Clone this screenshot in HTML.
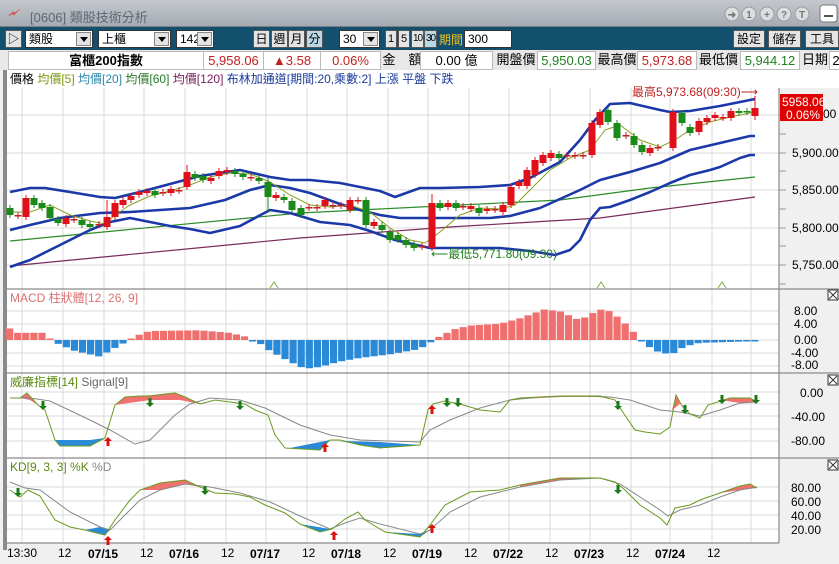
<!DOCTYPE html>
<html><head><meta charset="utf-8">
<style>
*{margin:0;padding:0;box-sizing:border-box}
body{width:839px;height:564px;overflow:hidden;background:#f0f0f0;font-family:"Liberation Sans","Noto Sans CJK TC",sans-serif;font-size:12px;position:relative}
.abs{position:absolute}
#title{left:0;top:0;width:839px;height:27px;background:linear-gradient(#c4c8ce,#a6aab2);border-bottom:1px solid #7a7e86}
#tb{left:0;top:27px;width:839px;height:23px;background:#13506e}
.sel{position:absolute;top:3px;height:18px;background:#fff;border:1px solid #333;font-size:12px;line-height:16px;padding-left:3px}
.sel .ar{position:absolute;right:1px;top:1px;width:15px;height:14px;background:#e4e4e4;border:1px solid #888}
.sel .ar:after{content:"";position:absolute;left:3px;top:4px;border-left:4px solid transparent;border-right:4px solid transparent;border-top:5px solid #000}
.btn{position:absolute;top:3px;height:18px;background:#e4e4e4;border:1px solid #555;font-size:12px;line-height:16px;text-align:center;overflow:hidden}
#info{left:0;top:50px;width:839px;height:20px;background:#e8e8e8}
.c{position:absolute;top:1px;height:19px;background:#fff;border:1px solid #bbb;font-size:13px;line-height:17px;text-align:center}
.l{position:absolute;top:1px;height:19px;font-size:13px;line-height:17px;text-align:center;color:#000}
</style></head><body>
<div id="title" class="abs">
 <svg class="abs" style="left:5px;top:6px" width="18" height="14"><path d="M2 11 L9 5 L8 8 L16 2 L8 10 L9 7 Z" fill="#e03020"/></svg>
 <div class="abs" style="left:30px;top:7px;color:#606572;font-size:13px">[0606] 類股技術分析</div>
 <svg class="abs" style="left:720px;top:3px" width="119" height="22">
  <g fill="#dcdde0" stroke="#9a9ca2"><circle cx="12" cy="11" r="7"/><circle cx="29" cy="11" r="7"/><circle cx="47" cy="11" r="7"/><circle cx="64" cy="11" r="7"/><circle cx="82" cy="11" r="7"/></g>
  <g fill="#777" font-size="10" font-weight="bold" text-anchor="middle"><text x="12" y="15">➜</text><text x="29" y="15">1</text><text x="47" y="15">+</text><text x="64" y="15">?</text><text x="82" y="15">T</text></g>
  <rect x="100" y="2" width="17" height="17" rx="3" fill="#fff" stroke="#777"/><rect x="104" y="12" width="9" height="2" fill="#555"/>
 </svg>
</div>
<div id="tb" class="abs">
 <div class="btn" style="left:5px;width:17px;font-size:12px">▷</div>
 <div class="sel" style="left:25px;width:68px">類股<div class="ar"></div></div>
 <div class="sel" style="left:98px;width:73px">上櫃<div class="ar"></div></div>
 <div class="sel" style="left:176px;width:38px">142<div class="ar"></div></div>
 <div class="btn" style="left:253px;width:17px">日</div>
 <div class="btn" style="left:271px;width:17px">週</div>
 <div class="btn" style="left:288px;width:17px">月</div>
 <div class="btn" style="left:306px;width:17px;background:#b8d8e8">分</div>
 <div class="sel" style="left:339px;width:41px">30<div class="ar"></div></div>
 <div class="btn" style="left:385px;width:12px;font-size:11px">1</div>
 <div class="btn" style="left:398px;width:12px;font-size:11px">5</div>
 <div class="btn" style="left:411px;width:13px;font-size:10px;letter-spacing:-1px">10</div>
 <div class="btn" style="left:424px;width:13px;font-size:10px;letter-spacing:-1px;background:#b8d8e8">30</div>
 <div class="abs" style="left:439px;top:4px;color:#f0c020;font-size:12px">期間</div>
 <div class="sel" style="left:464px;width:48px;font-size:12px">300</div>
 <div class="btn" style="left:733px;width:32px">設定</div>
 <div class="btn" style="left:768px;width:33px">儲存</div>
 <div class="btn" style="left:805px;width:34px">工具</div>
</div>
<div id="info" class="abs">
 <div class="c" style="left:8px;width:196px;font-weight:bold">富櫃200指數</div>
 <div class="c" style="left:203px;width:61px;color:#c02020">5,958.06</div>
 <div class="c" style="left:263px;width:58px;color:#c02020">▲3.58</div>
 <div class="c" style="left:320px;width:61px;color:#c02020">0.06%</div>
 <div class="l" style="left:382px;width:40px">金　額</div>
 <div class="c" style="left:420px;width:73px">0.00 億</div>
 <div class="l" style="left:494px;width:44px">開盤價</div>
 <div class="c" style="left:537px;width:59px;color:#208020">5,950.03</div>
 <div class="l" style="left:596px;width:42px">最高價</div>
 <div class="c" style="left:637px;width:60px;color:#c02020">5,973.68</div>
 <div class="l" style="left:697px;width:43px">最低價</div>
 <div class="c" style="left:740px;width:60px;color:#208020">5,944.12</div>
 <div class="l" style="left:800px;width:30px">日期</div>
 <div class="c" style="left:829px;width:14px">2</div>
</div>
<svg class="abs" style="left:0;top:70px" width="839" height="494" viewBox="0 70 839 494" id="ch">
 <rect x="0" y="70" width="839" height="494" fill="#f0f0f0"/>
 <rect x="3" y="70" width="4" height="480" fill="#8a8a8a"/>
 <rect x="7" y="70" width="772" height="473" fill="#fff"/>
 <rect x="7" y="70" width="832" height="18" fill="#fff"/>
 <g id="grid" stroke="#dadada" stroke-width="1"></g>
 <g stroke="#8a8a8a" stroke-width="1.2"><line x1="7" y1="289" x2="839" y2="289"/><line x1="7" y1="373" x2="839" y2="373"/><line x1="7" y1="458" x2="839" y2="458"/><line x1="7" y1="543" x2="779" y2="543"/><line x1="779" y1="88" x2="779" y2="543"/></g>
 <text x="10" y="83" font-size="12"><tspan fill="#000">價格 </tspan><tspan fill="#7a9a10">均價[5] </tspan><tspan fill="#2a8aaa">均價[20] </tspan><tspan fill="#2a7a2a">均價[60] </tspan><tspan fill="#7a2060">均價[120] </tspan><tspan fill="#1a3a9a">布林加通道[期間:20,乘數:2] 上漲  平盤  下跌</tspan></text>
 <polyline fill="none" stroke="#2a8a2a" stroke-width="1.2" points="10,241 300,213 440,206 560,200 650,188 755,177"/>
 <polyline fill="none" stroke="#7a2a5a" stroke-width="1.2" points="10,266 300,238 450,227 600,218 755,197"/>
 <g fill="none" stroke="#1a38a8" stroke-width="2.6" stroke-linejoin="round">
 <polyline points="10,192 30,188 45,188 70,192 100,197 115,198 140,192 170,184 200,176 240,170 270,177 290,180 310,180 340,183 360,187 380,191 395,197 420,188 440,188 480,187 510,185 530,178 560,162 580,140 595,120 610,104 630,103 660,110 670,112 690,111 720,106 750,100 755,99"/>
 <polyline points="10,230 30,225 60,218 100,213 130,212 160,210 190,208 225,200 250,190 270,185 290,188 310,193 340,204 360,210 380,215 400,218 430,218 460,218 490,218 510,216 540,208 560,199 580,190 600,180 630,172 660,163 690,150 720,143 750,136 755,136"/>
 <polyline points="10,267 30,260 50,250 70,240 90,230 110,222 130,218 150,222 170,226 190,229 210,233 240,226 270,210 290,213 320,222 350,225 370,231 395,240 430,248 460,248 500,248 530,251 555,255 570,250 580,240 590,220 600,208 610,207 630,200 650,192 670,183 690,175 710,170 720,167 740,158 750,155 755,155"/>
 </g>
 <polyline fill="none" stroke="#8aa020" stroke-width="1" points="10,212 30,212 50,205 70,215 90,221 105,224 115,215 130,205 150,196 170,191 190,185 210,177 230,173 250,174 270,182 290,195 310,205 330,207 350,205 370,212 390,228 410,240 425,243 440,232 460,215 480,208 500,209 515,205 530,190 550,170 570,158 590,150 605,130 620,125 640,140 660,147 675,140 690,130 710,122 730,117 755,112"/>
 <g id="cand"></g>
 <g stroke="#7cae40" fill="none" stroke-width="1"><path d="M270 288 l4 -6 l4 6"/><path d="M597 288 l4 -6 l4 6"/><path d="M718 288 l4 -6 l4 6"/></g>
 <text x="632" y="96" font-size="12" fill="#c02020">最高5,973.68(09:30)⟶</text>
 <text x="431" y="258" font-size="12" fill="#208020">⟵最低5,771.80(09:30)</text>
 <g font-size="12" fill="#000">
  <text x="792" y="157">5,900.00</text><text x="792" y="194">5,850.00</text><text x="792" y="232">5,800.00</text><text x="792" y="269">5,750.00</text><text x="823" y="118">00</text>
 </g>
 <g id="ticks" stroke="#999"></g>
 <rect x="780" y="94" width="43" height="27" fill="#e00000"/>
 <text x="782" y="106" font-size="12" fill="#fff">5958.06</text><text x="786" y="119" font-size="12" fill="#fff">0.06%</text>
 <text x="10" y="302" font-size="12" fill="#e07070">MACD 柱狀體[12, 26, 9]</text>
 <g id="macd"></g>
 <g font-size="12" fill="#000"><text x="794" y="315">8.00</text><text x="794" y="328">4.00</text><text x="794" y="344">0.00</text><text x="791" y="357">-4.00</text><text x="791" y="369">-8.00</text></g>
 <text x="10" y="386" font-size="12"><tspan fill="#5a8a10">威廉指標[14]</tspan><tspan fill="#666"> Signal[9]</tspan></text>
 <g fill="#f07070" stroke="none">
  <polygon points="20,398 27,393 38,405 30,400"/><polygon points="115,405 125,397 140,396 165,394 175,393 185,397 200,404 180,400 150,400"/>
  <polygon points="510,400 520,398 560,396 600,396 615,400 600,397 560,397 520,399"/><polygon points="720,400 730,398 750,398 757,402 740,403"/>
  <polygon points="672,410 676,395 680,404"/>
 </g>
 <g fill="#2a8ad8"><polygon points="55,440 60,446 90,446 105,438 90,440"/><polygon points="290,448 320,450 330,440"/><polygon points="340,441 360,445 380,448 420,445 380,442"/></g>
 <polyline fill="none" stroke="#888" stroke-width="1" points="10,398 30,398 50,401 90,420 110,430 135,444 150,440 160,430 175,415 190,404 210,398 240,400 265,408 300,425 330,435 360,440 420,442 430,430 450,420 480,408 510,400 540,397 580,396 610,397 630,400 660,410 680,412 690,414 700,416 720,410 740,403 757,402"/>
 <polyline fill="none" stroke="#6a9a20" stroke-width="1" points="10,398 20,398 27,393 38,405 45,410 55,440 60,446 90,446 105,438 115,405 125,397 140,396 150,396 165,394 175,393 185,397 200,404 215,400 230,402 245,404 255,410 268,415 275,435 285,448 320,450 330,440 340,440 360,445 380,448 420,445 428,410 433,404 445,401 460,404 480,410 500,412 510,400 520,398 560,396 600,396 615,400 620,408 635,430 645,432 660,434 670,427 676,395 682,406 690,414 700,418 708,405 730,398 750,398 757,402"/>
 <g font-size="12" fill="#000"><text x="800" y="397">0.00</text><text x="791" y="421">-40.00</text><text x="791" y="445">-80.00</text></g>
 <text x="10" y="471" font-size="12"><tspan fill="#5a8a10">KD[9, 3, 3] %K </tspan><tspan fill="#888">%D</tspan></text>
 <g fill="#f07070"><polygon points="140,490 160,483 185,480 200,487 185,484 160,490"/><polygon points="520,485 560,478 600,478 615,482 600,478 560,480 520,487"/><polygon points="720,493 740,486 750,484 757,488 740,490"/></g>
 <g fill="#2a8ad8"><polygon points="85,530 105,535 110,530 100,527"/><polygon points="300,524 320,532 330,529"/><polygon points="385,532 420,537 430,530 420,534"/></g>
 <polyline fill="none" stroke="#888" stroke-width="1" points="10,482 25,488 40,490 70,512 100,527 110,530 125,515 140,500 160,490 185,484 210,487 240,493 270,502 300,516 330,529 345,523 360,518 380,524 420,534 430,530 450,512 480,497 520,487 560,480 600,478 620,484 640,497 660,510 668,516 680,510 700,505 720,497 740,490 757,487"/>
 <polyline fill="none" stroke="#6a9a20" stroke-width="1" points="10,490 20,497 28,490 40,496 55,520 70,527 85,530 105,535 115,520 130,500 140,490 160,483 185,480 200,487 215,493 235,494 250,497 265,505 285,513 300,524 320,532 332,529 345,519 358,512 365,520 385,532 420,537 430,525 445,505 470,492 500,490 520,485 560,478 600,478 615,482 625,490 640,505 660,518 667,525 675,508 690,505 700,500 720,493 740,486 750,484 757,488"/>
 <g font-size="12" fill="#000"><text x="791" y="492">80.00</text><text x="791" y="506">60.00</text><text x="791" y="520">40.00</text><text x="791" y="534">20.00</text></g>
 <g id="arr"></g>
 <g fill="#fff" stroke="#333"><rect x="828" y="290" width="10" height="10"/><rect x="828" y="375" width="10" height="10"/><rect x="828" y="460" width="10" height="10"/></g>
 <g stroke="#333"><path d="M829 291 l8 8 M837 291 l-8 8 M829 376 l8 8 M837 376 l-8 8 M829 461 l8 8 M837 461 l-8 8"/></g>
 <g font-size="12" fill="#000">
  <text x="7" y="557">13:30</text><text x="58" y="557">12</text><text x="88" y="558" font-weight="bold">07/15</text><text x="140" y="557">12</text><text x="169" y="558" font-weight="bold">07/16</text><text x="221" y="557">12</text><text x="250" y="558" font-weight="bold">07/17</text><text x="302" y="557">12</text><text x="331" y="558" font-weight="bold">07/18</text><text x="383" y="557">12</text><text x="412" y="558" font-weight="bold">07/19</text><text x="464" y="557">12</text><text x="493" y="558" font-weight="bold">07/22</text><text x="545" y="557">12</text><text x="574" y="558" font-weight="bold">07/23</text><text x="626" y="557">12</text><text x="655" y="558" font-weight="bold">07/24</text><text x="707" y="557">12</text>
 </g>
</svg>
<script>
var NS="http://www.w3.org/2000/svg";
function el(p,t,a){var e=document.createElementNS(NS,t);for(var k in a)e.setAttribute(k,a[k]);document.getElementById(p).appendChild(e);return e;}
var vx=[22,63,104,144,185,226,266,307,347,388,428,469,509,550,590,631,670,712,751];
vx.forEach(function(x){el("grid","line",{x1:x,y1:88,x2:x,y2:543});});
[115,153,190,228,265,311,324,340,353,366,392,404,416,429,441,487,501,515,529].forEach(function(y){el("grid","line",{x1:7,y1:y,x2:779,y2:y});});
[96,115,134,153,171,190,209,228,246,265,284].forEach(function(y){el("ticks","line",{x1:779,y1:y,x2:786,y2:y});});
var C=[[10,208,215,'g'],[18,215,216,'d'],[26,198,217,'r'],[34,198,205,'g'],[42,203,208,'g'],[50,207,218,'g'],[58,219,223,'g'],[66,218,224,'r'],[74,219,220,'d'],[82,220,225,'g'],[90,224,227,'g'],[99,224,225,'d'],[107,217,227,'r',200],[115,203,217,'r'],[123,200,205,'r'],[131,196,200,'r'],[139,192,195,'r'],[147,191,193,'r'],[155,191,195,'g'],[163,192,193,'d'],[171,189,193,'r'],[179,190,191,'d'],[187,172,187,'r',165],[195,174,178,'g'],[203,176,180,'g'],[211,178,181,'r'],[219,171,176,'r'],[227,170,172,'r'],[235,171,174,'g'],[243,174,177,'g'],[251,177,178,'d'],[259,178,181,'g'],[268,182,197,'g',178,213],[276,195,198,'r'],[284,197,200,'g'],[292,201,210,'g'],[301,208,215,'g'],[309,207,208,'d'],[317,207,208,'d'],[325,200,206,'r'],[333,205,206,'d'],[341,205,206,'d'],[350,200,210,'r'],[358,200,201,'d'],[366,200,225,'g'],[374,222,226,'r'],[382,225,230,'g'],[390,232,240,'g'],[398,235,240,'g'],[406,240,245,'g'],[414,244,248,'g'],[422,246,247,'d'],[432,203,248,'r',194],[440,203,208,'g'],[448,203,207,'r'],[456,203,208,'g'],[463,206,207,'d'],[471,206,209,'r'],[479,208,213,'g'],[487,209,211,'r'],[495,209,210,'d'],[503,205,212,'r'],[511,187,205,'r'],[519,182,186,'r'],[527,170,186,'r'],[535,160,175,'r'],[543,155,163,'r'],[551,153,158,'r'],[559,154,158,'g'],[567,155,156,'d'],[575,155,156,'d'],[583,155,156,'d'],[592,123,155,'r'],[600,112,125,'r'],[608,110,122,'g'],[617,123,138,'g'],[626,135,136,'d'],[634,136,145,'g'],[642,145,152,'g'],[650,148,153,'r'],[658,147,148,'d'],[673,112,148,'r'],[682,113,123,'g'],[690,127,133,'g'],[699,121,132,'r'],[707,118,122,'r'],[715,115,118,'r'],[723,117,118,'r'],[731,111,118,'r'],[739,111,113,'g'],[747,111,112,'g'],[755,108,116,'r',96,120]];
C.forEach(function(c){var col=c[3]=='r'?'#e0101a':'#1a8a1a';if(c[3]=='d')col='#c02020';
 var ht=c[4]||c[1]-3,hb=c[5]||c[2]+3;
 el("cand","line",{x1:c[0],y1:ht,x2:c[0],y2:hb,stroke:col,"stroke-width":1});
 el("cand","rect",{x:c[0]-3.5,y:c[1],width:7,height:Math.max(c[2]-c[1],1.5),fill:col});});
var K=[[10,3.2],[18,2],[45,2],[50,0.3],[58,-1],[75,-3],[100,-4.6],[110,-3],[120,-1.5],[128,-0.3],[135,1],[150,2.5],[200,2.7],[230,2],[245,1],[250,0],[258,-0.5],[270,-3],[290,-6],[305,-8],[320,-7.5],[340,-6],[360,-5],[390,-4],[420,-2.5],[432,-0.5],[440,1],[455,3],[470,4],[500,4.5],[520,6],[545,8.5],[560,8],[580,5.5],[600,8.5],[610,8],[620,6],[630,3.5],[640,0.2],[650,-2],[660,-3.5],[672,-4],[685,-1.8],[700,-0.8],[760,-0.3]];
function iv(x){for(var i=0;i<K.length-1;i++){if(x<=K[i+1][0]){var t=(x-K[i][0])/(K[i+1][0]-K[i][0]);return K[i][1]+t*(K[i+1][1]-K[i][1]);}}return K[K.length-1][1];}
for(var x=10;x<=758;x+=8.1){var v=iv(x),h=Math.max(Math.abs(v)*3.6,1.5);el("macd","rect",{x:x-4,y:v>0?340-h:340,width:7.2,height:h,fill:v>0?'#f07070':'#2a8ad8'});}
function arr(x,y,up){var c=up?'#e01010':'#1a7a1a';var d=up?"M"+x+" "+(y-6)+" l-4 4 h2.5 v5 h3 v-5 h2.5 z":"M"+x+" "+(y+6)+" l-4 -4 h2.5 v-5 h3 v5 h2.5 z";el("arr","path",{d:d,fill:c});}
[[43,404],[150,401],[240,404],[447,401],[458,401],[618,404],[685,408],[722,398],[756,398],[18,491],[205,489],[618,488]].forEach(function(a){arr(a[0],a[1],false);});
[[108,437],[325,443],[432,405],[108,536],[334,531],[432,524]].forEach(function(a){arr(a[0],a[1]+6,true);});
</script>
</body></html>
